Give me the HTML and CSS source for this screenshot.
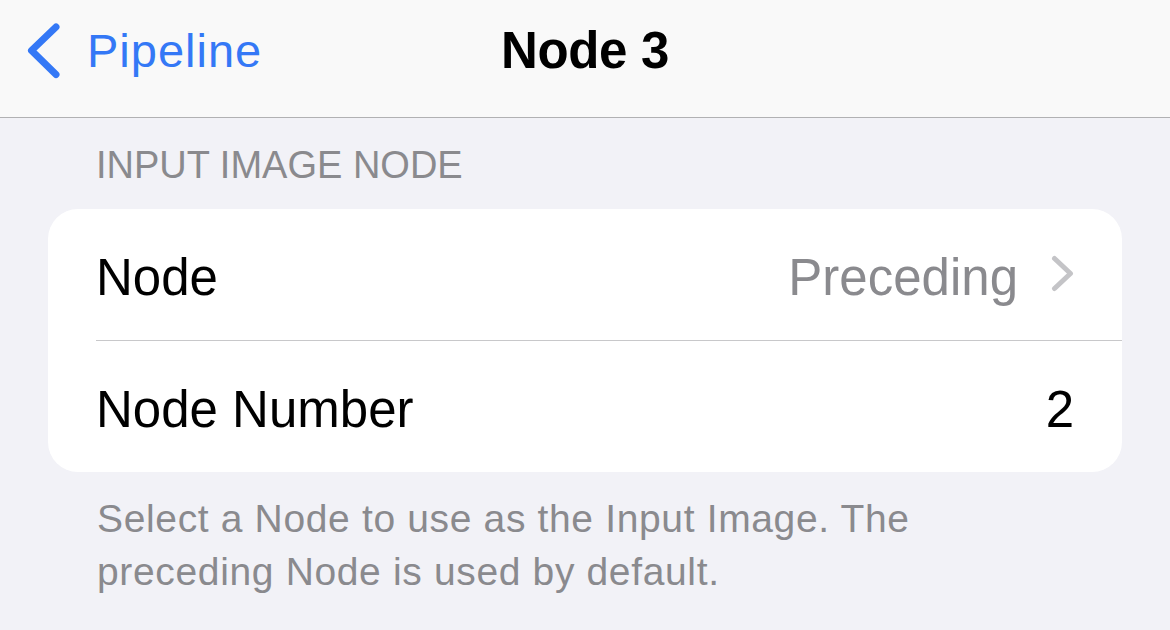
FILE: index.html
```html
<!DOCTYPE html>
<html lang="en">
<head>
<meta charset="utf-8">
<title>Node 3</title>
<link rel="stylesheet" href="styles.css">
</head>
<body>
  <header class="navbar">
    <div class="nav-left">
      <a class="back">
        <svg class="back-icon" width="40" height="60" viewBox="0 0 40 60" aria-hidden="true">
          <path d="M32 6 L7.5 29.5 L32 53.5" fill="none" stroke="#3478f6" stroke-width="7" stroke-linecap="round" stroke-linejoin="round"/>
        </svg>
        <span class="back-label">Pipeline</span>
      </a>
    </div>
    <h1 class="nav-title">Node 3</h1>
    <div class="nav-right"></div>
  </header>

  <main class="content">
    <section class="group">
      <h2 class="group-header">INPUT IMAGE NODE</h2>
      <div class="card">
        <div class="row">
          <span class="row-label">Node</span>
          <span class="row-value muted">Preceding</span>
          <svg class="disclosure" width="24" height="44" viewBox="0 0 24 44" aria-hidden="true">
            <path d="M4.5 4.5 L20.5 19.5 L4.5 34.5" fill="none" stroke="#c4c4c7" stroke-width="5" stroke-linecap="round" stroke-linejoin="round"/>
          </svg>
        </div>
        <div class="sep"></div>
        <div class="row">
          <span class="row-label">Node Number</span>
          <span class="row-value">2</span>
        </div>
      </div>
      <p class="group-footer">Select a Node to use as the Input Image. The preceding Node is used by default.</p>
    </section>
  </main>
</body>
</html>
```

FILE: styles.css
```css
* {
  box-sizing: border-box;
}

html, body {
  margin: 0;
  padding: 0;
}

body {
  width: 1170px;
  height: 630px;
  overflow: hidden;
  background: #f2f2f7;
  font-family: "Liberation Sans", Arial, sans-serif;
  color: #000;
}

.navbar {
  height: 118px;
  background: #f9f9f9;
  border-bottom: 1px solid #b1b1b3;
  display: grid;
  grid-template-columns: 1fr auto 1fr;
  align-items: start;
  padding-top: 21px;
}

.nav-left {
  display: flex;
  padding-left: 24px;
}

.back {
  display: flex;
  align-items: center;
  color: #3478f6;
  text-decoration: none;
}

.back-icon {
  display: block;
  flex: none;
}

.back-label {
  margin-left: 23px;
  font-size: 47px;
  line-height: 60px;
  letter-spacing: 1px;
}

.nav-title {
  margin: 0;
  font-size: 51px;
  line-height: 60px;
  font-weight: 700;
  letter-spacing: -0.3px;
}

.content {
  padding: 25px 48px 0 48px;
}

.group-header {
  margin: 0 0 21px;
  padding-left: 48px;
  font-size: 38px;
  line-height: 45px;
  font-weight: 400;
  color: #8a8a8e;
}

.card {
  background: #fff;
  border-radius: 30px;
  overflow: hidden;
}

.row {
  display: flex;
  align-items: center;
  height: 131px;
  padding: 6px 48px 0 48px;
}

.row-label {
  flex: 1;
  font-size: 51px;
  line-height: 61px;
}

.row-value {
  font-size: 51px;
  line-height: 61px;
}

.muted {
  color: #8a8a8e;
}

.disclosure {
  display: block;
  flex: none;
  margin-left: 32px;
  margin-top: -4px;
}

.sep {
  height: 1px;
  margin-left: 48px;
  background: #c8c8ca;
}

.group-footer {
  margin: 20px 0 0;
  padding-left: 49px;
  max-width: 910px;
  font-size: 39px;
  line-height: 53px;
  letter-spacing: 0.65px;
  color: #8a8a8e;
}
```
